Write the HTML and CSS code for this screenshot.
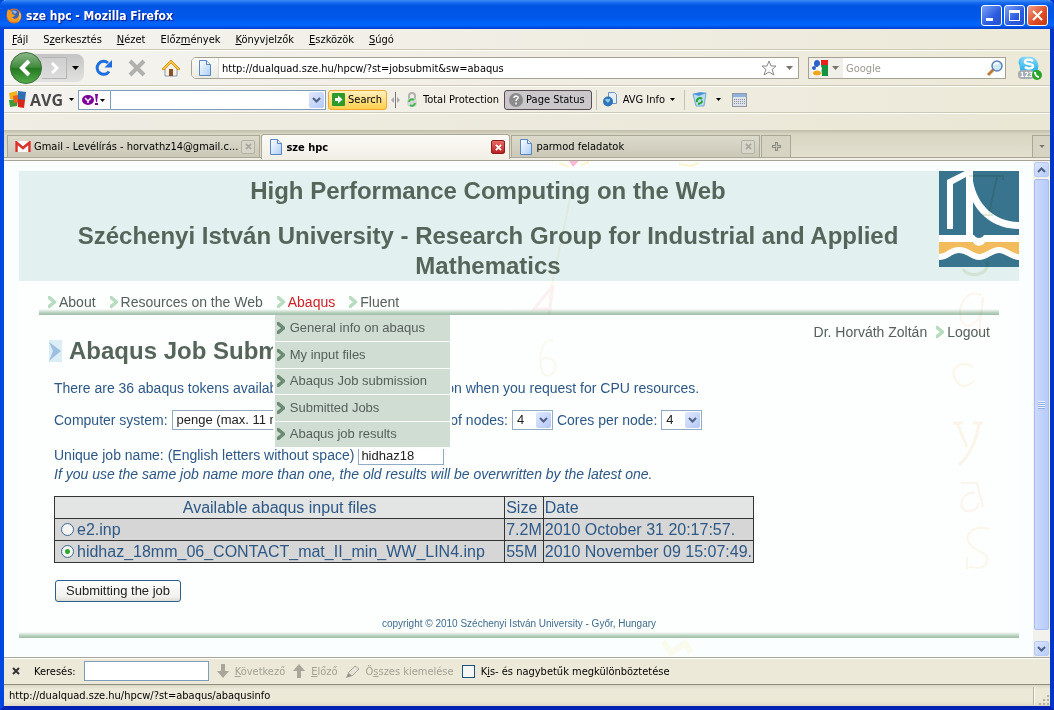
FILE: index.html
```html
<!DOCTYPE html>
<html lang="hu">
  <head>
    <meta charset="utf-8" />
    <title>sze hpc - Mozilla Firefox</title>
    <link rel="stylesheet" href="styles.css">
  </head>
  <body>
    <svg class="defs" width="0" height="0">
      <defs>
        <linearGradient id="greenball" x1="0" y1="0" x2="0" y2="1">
          <stop offset="0" stop-color="#8db98a" />
          <stop offset="0.48" stop-color="#3f8a3c" />
          <stop offset="0.52" stop-color="#237a20" />
          <stop offset="1" stop-color="#55ad4c" />
        </linearGradient>
        <linearGradient id="sheet" x1="0" y1="0" x2="1" y2="1">
          <stop offset="0" stop-color="#ffffff" />
          <stop offset="1" stop-color="#a9cdf5" />
        </linearGradient>
        <linearGradient id="skyblue" x1="0" y1="0" x2="0" y2="1">
          <stop offset="0" stop-color="#8fdcf8" />
          <stop offset="1" stop-color="#0ba4e4" />
        </linearGradient>
        <symbol id="down" viewBox="0 0 7 4"><path d="M0 0h7L3.5 4z" fill="currentColor" /></symbol>
        <symbol id="doc" viewBox="0 0 14 16">
          <path d="M1.500.5h7l4 4v11h-11z" fill="url(#sheet)" stroke="#5b86c4" />
          <path d="M8.500.5v4h4" fill="#dcebfb" stroke="#5b86c4" />
        </symbol>
        <symbol id="cross" viewBox="0 0 8 8"><path d="M1 1l6 6M7 1L1 7" fill="none" stroke="currentColor" stroke-width="2" /></symbol>
        <symbol id="chev" viewBox="0 0 9 12"><path d="M0 0h2l6 5v2l-6 5H0V9l4-3-4-3z" fill="currentColor" /></symbol>
        <symbol id="vee" viewBox="0 0 9 6"><path d="M1 1l3.500 3.500L8 1" fill="none" stroke="currentColor" stroke-width="2" /></symbol>
      </defs>
    </svg>

    <div class="window">
      <header class="titlebar">
        <svg width="16" height="16" viewBox="0 0 16 16">
          <circle cx="8" cy="8" r="7.500" fill="#e2731a" />
          <circle cx="8.500" cy="6.500" r="5" fill="#3c63b5" />
          <path d="M6 3c2-1 4 0 5 1l-2 2z" fill="#8fb6e8" />
          <path d="M1 4l1-3 2 2c2 0 3 1 2 3l3 1c-1 2-2 2-3 2 2 3 6 2 7-2 1 4-2 7-5 7-5 0-8-5-7-10z" fill="#f49b25" />
          <path d="M14 4c2 5 0 9-4 11 3-2 4-6 3-9z" fill="#fbd34b" />
        </svg>
        <h1>sze hpc - Mozilla Firefox</h1>
        <button class="winbtn" aria-label="Minimize"><svg width="19" height="19"><path d="M4 12h7v3H4z" fill="#fff" /></svg></button>
        <button class="winbtn" aria-label="Maximize"><svg width="19" height="19"><path d="M4 4h11v11H4zM5 7v7h9V7z" fill="#fff" fill-rule="evenodd" /></svg></button>
        <button class="winbtn close" aria-label="Close"><svg width="19" height="19"><path d="M5 5l9 9M14 5l-9 9" stroke="#fff" stroke-width="2" /></svg></button>
      </header>

      <nav class="menubar">
        <button><u>F</u>ájl</button>
        <button>S<u>z</u>erkesztés</button>
        <button><u>N</u>ézet</button>
        <button>Előz<u>m</u>ények</button>
        <button><u>K</u>önyvjelzők</button>
        <button><u>E</u>szközök</button>
        <button><u>S</u>úgó</button>
      </nav>

      <div class="toolbar navbar">
        <div class="history">
          <button class="back" aria-label="Back">
            <svg width="32" height="32" viewBox="0 0 32 32">
              <circle cx="16" cy="16" r="15.500" fill="url(#greenball)" stroke="#3c6f3a" />
              <path d="M19 9l-7 7 7 7" fill="none" stroke="#fff" stroke-width="4" />
            </svg>
          </button>
          <button class="forward" aria-label="Forward">
            <svg width="9" height="12" viewBox="0 0 9 12"><path d="M2 1l5 5-5 5" fill="none" stroke="#fff" stroke-width="3" /></svg>
          </button>
          <button class="recent" aria-label="Recent pages"><svg width="7" height="4"><use href="#down" /></svg></button>
        </div>
        <button class="tool reload" aria-label="Reload">
          <svg width="18" height="18" viewBox="0 0 18 18">
            <path d="M14 12.500A6.500 6.500 0 1 1 13 4" fill="none" stroke="#1d6fe0" stroke-width="3" />
            <path d="M17 1v7.500H9.500z" fill="#1d6fe0" />
          </svg>
        </button>
        <button class="tool stop" aria-label="Stop">
          <svg width="18" height="18" viewBox="0 0 18 18"><path d="M2 2l14 14M16 2L2 16" stroke="#b0b0ad" stroke-width="4" /></svg>
        </button>
        <button class="tool home" aria-label="Home">
          <svg width="20" height="18" viewBox="0 0 20 18">
            <path d="M4 9l6-6 6 6v8H4z" fill="#f4f1e6" stroke="#8a98b5" />
            <path d="M1 10l9-9 9 9-2 1-7-7-7 7z" fill="#f8c84a" stroke="#d8951d" />
            <path d="M8 10h4v7H8z" fill="#8a4f23" />
          </svg>
        </button>
        <label class="urlbar">
          <span class="site"><svg width="14" height="16"><use href="#doc" /></svg></span>
          <input type="text" aria-label="Address" value="http://dualquad.sze.hu/hpcw/?st=jobsubmit&amp;sw=abaqus" />
          <svg width="16" height="16" viewBox="0 0 16 16"><path d="M8 1l2 5h5l-4 3.500 2 5.500-5-3-5 3 2-5.500L1 6h5z" fill="#fff" stroke="#8a8a8a" /></svg>
          <svg class="grey" width="7" height="4"><use href="#down" /></svg>
        </label>
        <label class="searchbar">
          <span class="engine">
            <svg width="16" height="16" viewBox="0 0 16 16">
              <path d="M0 0h16v16H0z" fill="#fff" />
              <path d="M9 0h7v5h-7z" fill="#e8201c" />
              <path d="M9 5h7v11h-6z" fill="#149443" />
              <ellipse cx="5" cy="3.500" rx="3" ry="3.500" fill="#2a62c9" />
              <circle cx="2" cy="8" r="2" fill="#2a62c9" />
              <path d="M7 5l3 3-1 3-4-2z" fill="#fff" />
              <ellipse cx="5" cy="13" rx="4" ry="2.500" fill="#f3a51b" />
            </svg>
            <svg class="grey" width="7" height="4"><use href="#down" /></svg>
          </span>
          <input type="text" aria-label="Search" placeholder="Google" />
          <svg width="17" height="17" viewBox="0 0 17 17">
            <path d="M2 15l6-6" stroke="#c2793a" stroke-width="3" />
            <circle cx="11" cy="6" r="5" fill="#cfe8fb" stroke="#5c83b6" stroke-width="1.500" />
            <path d="M8 5c1-2 3-2 4-1" fill="none" stroke="#fff" stroke-width="2" />
          </svg>
        </label>
        <button class="tool skype" aria-label="Skype">
          <svg width="24" height="24" viewBox="0 0 24 24">
            <circle cx="6" cy="6" r="5.500" fill="url(#skyblue)" />
            <circle cx="11" cy="10" r="9.500" fill="url(#skyblue)" />
            <path d="M15 5c-3-2-8-2-8 1s8 1 8 4-6 3-8 1" fill="none" stroke="#fff" stroke-width="2.500" />
            <rect y="14" width="16" height="9" rx="4" fill="#a5adb2" />
            <text x="2" y="21" class="badge">123</text>
            <circle cx="19" cy="19" r="5" fill="#28a428" />
            <path d="M17 16c0 3 2 5 4 5" fill="none" stroke="#fff" stroke-width="2" />
          </svg>
        </button>
      </div>

      <div class="toolbar avgbar">
        <button class="avg">
          <svg width="17" height="17" viewBox="0 0 17 17">
            <path d="M0 2l8-2v8H1z" fill="#f2b31c" />
            <path d="M9 0l8 1-1 8H8z" fill="#2f6fb4" />
            <path d="M8 8l8 1-1 8-6-1z" fill="#d8261c" />
            <path d="M0 9l8-1v7l-7 1z" fill="#3f9a34" />
            <path d="M4 5l5-1v7l-4 1z" fill="#e8601d" />
          </svg>
          <b>AVG</b>
          <svg width="5" height="3"><use href="#down" /></svg>
        </button>
        <div class="combo">
          <button class="yahoo" aria-label="Yahoo">
            <svg width="25" height="12" viewBox="0 0 25 12">
              <ellipse cx="6" cy="6" rx="6" ry="5" fill="#7b0099" />
              <path d="M3 4l3 3 3-3M6 7v2" fill="none" stroke="#fff" stroke-width="1.500" />
              <path d="M13 0h3l-1 8h-1zM13 9h3v2h-3z" fill="#7b0099" />
              <path d="M18 5h5l-2.500 3z" fill="#000" />
            </svg>
          </button>
          <input type="text" aria-label="Yahoo search" />
          <button class="drop" aria-label="Open"><svg width="9" height="6"><use href="#vee" /></svg></button>
        </div>
        <button class="go">
          <svg width="13" height="13" viewBox="0 0 13 13">
            <rect width="13" height="13" rx="1" fill="#2f9a2c" />
            <path d="M3 5h3V2.500L10.500 6.500 6 10.500V8H3z" fill="#fff" />
          </svg>
          Search
        </button>
        <svg class="grip" width="9" height="16" viewBox="0 0 9 16"><path d="M4 0h1v16H4z" fill="#777" /><path d="M3 5v6L0 8zM6 5v6l3-3z" fill="#aaa" /></svg>
        <button class="flat lock">
          <svg width="12" height="16" viewBox="0 0 12 16">
            <path d="M3 7V4a3 3 0 0 1 6 0v3" fill="none" stroke="#b0b2b0" stroke-width="2" />
            <rect x="1" y="6" width="10" height="9" rx="4" fill="#d4d8d4" />
            <path d="M3 10a3 3 0 0 1 5-2M9 11a3 3 0 0 1-5 2" fill="none" stroke="#3fb54a" stroke-width="2" />
          </svg>
          Total Protection
        </button>
        <button class="status">
          <svg width="14" height="14" viewBox="0 0 14 14">
            <circle cx="7" cy="7" r="7" fill="#8b8b8b" />
            <path d="M5 5c0-3 5-2 4 0-.5 1-2 1.500-2 3M7 9.500v2" fill="none" stroke="#fff" stroke-width="1.500" />
          </svg>
          Page Status
        </button>
        <span class="sep"></span>
        <button class="flat info">
          <svg width="15" height="15" viewBox="0 0 15 15">
            <path d="M5.500.5h6l2 2v9h-8z" fill="#e4effa" stroke="#6b93c4" />
            <circle cx="5" cy="9.500" r="5" fill="#2d74b8" />
            <path d="M2 8c2-3 3 0 4-1s2 1 0 3-2-1-4-2z" fill="#8fcbe8" />
          </svg>
          AVG Info
          <svg width="5" height="3"><use href="#down" /></svg>
        </button>
        <span class="sep"></span>
        <button class="flat bin" aria-label="Recycle">
          <svg width="15" height="15" viewBox="0 0 15 15">
            <path d="M1 2l13-1-2 13H4z" fill="#b9dcf3" stroke="#77a9d0" />
            <path d="M1 2l6 2 7-3-6-1z" fill="#4f95d6" />
            <path d="M5 10a3 3 0 0 1 5-3M10 8.500a3 3 0 0 1-4 3" fill="none" stroke="#29a329" stroke-width="2" />
          </svg>
          <svg width="5" height="3"><use href="#down" /></svg>
        </button>
        <button class="flat" aria-label="Calculator">
          <svg width="15" height="14" viewBox="0 0 15 14">
            <rect x=".5" y=".5" width="14" height="13" fill="#dfe3e8" stroke="#8f99a5" />
            <path d="M1 1h13v3H1z" fill="#8db5dc" />
            <path d="M2 6.500h11M2 8.500h11M2 10.500h11" stroke="#8893a0" stroke-dasharray="1 1" />
          </svg>
        </button>
      </div>

      <div class="emptybar"></div>

      <div class="tabstrip">
        <div class="tab">
          <svg width="16" height="11" viewBox="0 0 16 11">
            <path d="M0 0h16v11H0z" fill="#fff" />
            <path d="M1.500 11V1.500L8 7l6.500-5.500V11" fill="none" stroke="#d9332d" stroke-width="2.500" />
          </svg>
          <a href="#gmail">Gmail - Levélírás - horvathz14@gmail.c...</a>
          <button class="x" aria-label="Close tab"><svg width="7" height="7"><use href="#cross" /></svg></button>
        </div>
        <div class="tab current">
          <svg width="14" height="16"><use href="#doc" /></svg>
          <a href="#szehpc">sze hpc</a>
          <button class="x" aria-label="Close tab"><svg width="7" height="7"><use href="#cross" /></svg></button>
        </div>
        <div class="tab">
          <svg width="14" height="16"><use href="#doc" /></svg>
          <a href="#parmod">parmod feladatok</a>
          <button class="x" aria-label="Close tab"><svg width="7" height="7"><use href="#cross" /></svg></button>
        </div>
        <button class="newtab" aria-label="New tab"><svg width="9" height="9" viewBox="0 0 9 9"><path d="M3 0h3v3h3v3H6v3H3V6H0V3h3z" fill="#8b8b80" /><path d="M4 1h1v3h3v1H5v3H4V5H1V4h3z" fill="#c9c7b8" /></svg></button>
        <button class="alltabs" aria-label="List tabs"><svg width="6" height="3"><use href="#down" /></svg></button>
      </div>

      <div class="viewport">
        <div class="page">
          <svg class="scribble" width="520" height="496" viewBox="0 0 520 496" aria-hidden="true">
            <g fill="none" stroke-width="2">
              <path d="M66 0l4 6 6-6z" fill="#ffa0c8" stroke="none" />
              <path d="M56 2l10 4M78 4l8-3M176 3l12 2 8-3" stroke="#fff3b8" />
              <path d="M70 22l-10 50-14 66" stroke="#faf6e6" />
              <path d="M49 126l-18 22h18M50 124l-4 30" stroke="#fdecec" stroke-width="3" />
              <path d="M50 180c-14-6-16 30-8 34s16-12 6-16-12 4-10 10" stroke="#fbf8ea" />
              <path d="M466 15h34v4M494 16l-8 36M480 54h10" stroke="#d6dfc9" />
              <path d="M460 108c6 10 28 6 24-8" stroke="#e5ebd4" stroke-width="3" />
              <path d="M478 134c-14-6-24 10-20 24s22 6 22-22l-4 36" stroke="#fcf3e8" />
              <path d="M470 206c-12-8-24 2-18 12s12 8 20 2" stroke="#fdf3e2" />
              <path d="M450 262h10M470 262h10M454 262l10 24M476 262c-2 16-10 34-20 42" stroke="#fdf1e0" stroke-width="3" />
              <path d="M458 322h16l6 24M472 332c-14-2-18 16-8 18s12-8 12-8" stroke="#fdf1e6" />
              <path d="M486 368c-14-4-26 4-20 14s20 8 18 18-12 6-18 6M464 396v12" stroke="#fdf5e0" />
              <path d="M160 480l8 12 14-10 6 10" stroke="#fdfce6" stroke-width="6" />
            </g>
          </svg>
          <div class="wrap">
            <header class="banner">
              <div class="names">
                <h2>High Performance Computing on the Web</h2>
                <h2>Széchenyi István University - Research Group for Industrial and Applied Mathematics</h2>
              </div>
              <svg class="logo" width="80" height="96" viewBox="0 0 80 96">
                <path d="M0 0h80v96H0z" fill="#39748f" />
                <path d="M8 58V9L26 0h8v64h-7V6L14 13v45z" fill="#fff" />
                <path d="M34 10c4 24 22 41 46 41v7C58 58 42 46 34 31z" fill="#fff" />
                <path d="M0 71h80v16H0z" fill="#f2bb5b" />
                <path d="M0 64h80v7H46c-2 5-10 5-12 0H0z" fill="#fff" />
                <path d="M35 64c2 4 8 4 10 0z" fill="#39748f" />
                <path d="M0 86c10 0 10-7 20-7s12 7 20 7 12-7 20-7 12 7 20 7v10H0z" fill="#39748f" />
                <path d="M0 86c10 0 10-7 20-7s12 7 20 7 12-7 20-7 12 7 20 7" fill="none" stroke="#fff" stroke-width="6" />
              </svg>
            </header>

            <ul class="mainnav">
              <li><svg width="9" height="12"><use href="#chev" /></svg><a href="#about">About</a></li>
              <li><svg width="9" height="12"><use href="#chev" /></svg><a href="#resources">Resources on the Web</a></li>
              <li class="open">
                <svg width="9" height="12"><use href="#chev" /></svg><a href="#abaqus">Abaqus</a>
                <ul class="submenu">
                  <li><svg width="9" height="12"><use href="#chev" /></svg><a href="#abaqusinfo">General info on abaqus</a></li>
                  <li><svg width="9" height="12"><use href="#chev" /></svg><a href="#files">My input files</a></li>
                  <li><svg width="9" height="12"><use href="#chev" /></svg><a href="#jobsubmit">Abaqus Job submission</a></li>
                  <li><svg width="9" height="12"><use href="#chev" /></svg><a href="#jobs">Submitted Jobs</a></li>
                  <li><svg width="9" height="12"><use href="#chev" /></svg><a href="#results">Abaqus job results</a></li>
                </ul>
              </li>
              <li><svg width="9" height="12"><use href="#chev" /></svg><a href="#fluent">Fluent</a></li>
            </ul>

            <div class="headrow">
              <svg width="13" height="22" viewBox="0 0 13 22">
                <path d="M0 0h13v22H0z" fill="#dceef5" />
                <path d="M0 2l12 9-12 10 4-10z" fill="#9dbfe2" />
              </svg>
              <h2>Abaqus Job Submission</h2>
              <p class="user">Dr. Horváth Zoltán <svg width="9" height="12"><use href="#chev" /></svg><a href="#logout">Logout</a></p>
            </div>

            <form class="jobform">
              <p>There are 36 abaqus tokens available, take this into consideration when you request for CPU resources.</p>
              <div class="row">
                <label for="system">Computer system:</label>
                <span class="pick system">
                  <select id="system"><option>penge (max. 11 nodes)</option></select>
                  <span class="arrow"><svg width="9" height="6"><use href="#vee" /></svg></span>
                </span>
                <label for="nodes">Number of nodes:</label>
                <span class="pick">
                  <select id="nodes"><option>4</option></select>
                  <span class="arrow"><svg width="9" height="6"><use href="#vee" /></svg></span>
                </span>
                <label for="cores">Cores per node:</label>
                <span class="pick">
                  <select id="cores"><option>4</option></select>
                  <span class="arrow"><svg width="9" height="6"><use href="#vee" /></svg></span>
                </span>
              </div>
              <div class="row jobname">
                <label for="jobname">Unique job name: (English letters without space)</label>
                <input type="text" id="jobname" value="hidhaz18" />
              </div>
              <p class="note">If you use the same job name more than one, the old results will be overwritten by the latest one.</p>
              <table>
                <thead>
                  <tr><th class="file">Available abaqus input files</th><th>Size</th><th>Date</th></tr>
                </thead>
                <tbody>
                  <tr>
                    <td><label><input type="radio" name="inp" />e2.inp</label></td>
                    <td>7.2M</td>
                    <td>2010 October 31 20:17:57.</td>
                  </tr>
                  <tr>
                    <td><label><input type="radio" name="inp" checked />hidhaz_18mm_06_CONTACT_mat_II_min_WW_LIN4.inp</label></td>
                    <td>55M</td>
                    <td>2010 November 09 15:07:49.</td>
                  </tr>
                </tbody>
              </table>
              <button type="button" class="submit">Submitting the job</button>
            </form>
            <footer class="copy">copyright © 2010 Széchenyi István University - Győr, Hungary</footer>
          </div>
        </div>
        <div class="scrollbar">
          <button aria-label="Scroll up"><svg width="9" height="6" class="flip"><use href="#vee" /></svg></button>
          <div class="thumb"></div>
          <button aria-label="Scroll down"><svg width="9" height="6"><use href="#vee" /></svg></button>
        </div>
      </div>

      <div class="findbar">
        <button class="closefind" aria-label="Close"><svg width="8" height="8"><use href="#cross" /></svg></button>
        <label for="find">Keresés:</label>
        <input type="text" id="find" />
        <button disabled><svg width="12" height="14" viewBox="0 0 12 14"><path d="M4 0h4v7h4l-6 7-6-7h4z" fill="#a8a69b" /></svg><span><u>K</u>övetkező</span></button>
        <button disabled><svg width="12" height="14" viewBox="0 0 12 14"><path d="M4 14h4V7h4L6 0 0 7h4z" fill="#a8a69b" /></svg><span><u>E</u>lőző</span></button>
        <button disabled><svg width="14" height="13" viewBox="0 0 14 13"><path d="M2 8l7-7 4 3-7 7z" fill="#e6e4da" stroke="#a8a69b" /><path d="M2 8l4 3-6 2z" fill="#98968b" /></svg><span>Ö<u>s</u>szes kiemelése</span></button>
        <label class="case"><input type="checkbox" /><span>K<u>i</u>s- és nagybetűk megkülönböztetése</span></label>
      </div>
      <div class="statusbar">
        <span>http://dualquad.sze.hu/hpcw/?st=abaqus/abaqusinfo</span>
        <svg width="17" height="20" viewBox="0 0 17 20">
          <path d="M0 1h1v18H0z" fill="#b5b19f" /><path d="M1 1h1v18H1z" fill="#fff" />
          <path d="M14 9h2v2h-2zM10 13h2v2h-2zM14 13h2v2h-2zM6 17h2v2H6zM10 17h2v2h-2zM14 17h2v2h-2z" fill="#b5b19f" />
        </svg>
      </div>
    </div>
  </body>
</html>
```
FILE: styles.css
```css
* {
  box-sizing: border-box;
}
body {
  margin: 0;
  font-family: "DejaVu Sans Condensed", "Noto Sans", sans-serif;
  font-size: 11px;
  color: #000;
}
h1,
h2,
p,
ul {
  margin: 0;
  padding: 0;
  font-size: inherit;
}
ul {
  list-style: none;
}
svg {
  display: block;
  flex: none;
}
.defs {
  position: absolute;
}
button,
input,
select {
  font: inherit;
  color: inherit;
  margin: 0;
  padding: 0;
  border: 0;
  border-radius: 0;
  background: none;
}
a {
  color: inherit;
  text-decoration: none;
}
.window {
  display: flex;
  flex-direction: column;
  min-height: 100vh;
  border: 4px solid #0046e0;
  border-top: 0;
  border-right-color: #0036c8;
  border-bottom-color: #0022b4;
  background: #ece9d8;
}

/* title bar */
.titlebar {
  display: flex;
  align-items: center;
  gap: 2px;
  height: 29px;
  margin: 0 -4px;
  padding: 2px 6px 0;
  background: linear-gradient(#3c8cf5 0, #1368ee 3px, #0054e3 6px, #0058ea 18px, #0066ff 25px, #003dd0 29px);
  border-radius: 6px 6px 0 0;
}
.titlebar h1 {
  flex: 1;
  padding-left: 2px;
  color: #fff;
  font-size: 12px;
  font-weight: bold;
  text-shadow: 1px 1px 1px #0a1883;
}
.winbtn {
  width: 21px;
  height: 21px;
  border: 1px solid #fff;
  border-radius: 3px;
  background: linear-gradient(135deg, #7da2f5, #2a5be0 60%, #2450cc);
}
.winbtn.close {
  background: linear-gradient(135deg, #f0a088, #dd4a22 60%, #c23a12);
}

/* menu and toolbars */
.menubar {
  display: flex;
  gap: 15px;
  height: 21px;
  padding: 0 8px;
  background: linear-gradient(90deg, #f4f3ef, #ece9d8);
  border-bottom: 1px solid #cdc9b6;
}
.toolbar {
  display: flex;
  align-items: center;
  border-top: 1px solid #fff;
  border-bottom: 1px solid #cdc9b6;
  background: linear-gradient(90deg, #f4f3ef, #ece9d8);
}
.navbar {
  height: 36px;
  padding: 0 8px 0 6px;
}
.history {
  display: flex;
  align-items: center;
  width: 74px;
  height: 28px;
  border-radius: 14px 8px 8px 14px;
  background: linear-gradient(#c4c4c4, #e2e2e0);
}
.forward {
  display: flex;
  align-items: center;
  justify-content: center;
  width: 25px;
  height: 22px;
  border: 1px solid #b5b5b5;
  border-left: 0;
  background: linear-gradient(#cfcfcf, #dcdcdc);
}
.recent {
  padding: 4px 5px;
}
.reload {
  margin-left: 11px;
}
.stop {
  margin-left: 15px;
}
.home {
  margin-left: 15px;
}
.urlbar,
.searchbar {
  display: flex;
  align-items: center;
  height: 22px;
  border: 1px solid #a5a293;
  background: #fff;
}
.urlbar {
  flex: 1;
  gap: 9px;
  margin-left: 10px;
  padding-right: 5px;
  border-radius: 5px 0 0 5px;
}
.site {
  display: flex;
  align-items: center;
  justify-content: center;
  width: 27px;
  height: 20px;
  border-right: 1px solid #dcdad0;
  border-radius: 4px 0 0 4px;
  background: linear-gradient(#fbfbf9, #ecebe3);
}
.urlbar input {
  margin-left: -6px;
}
.urlbar input,
.searchbar input {
  flex: 1;
  min-width: 0;
}
.grey {
  color: #77756b;
}
.searchbar {
  width: 198px;
  margin-left: 9px;
  padding-right: 2px;
}
.engine {
  display: flex;
  align-items: center;
  gap: 4px;
  height: 20px;
  padding: 0 4px 0 3px;
  margin-right: 3px;
  background: #f0efe9;
}
.searchbar input::placeholder {
  color: #9b998e;
  opacity: 1;
}
.skype {
  margin-left: 12px;
}
.badge {
  font-size: 7px;
  font-weight: bold;
  fill: #fff;
}
.avgbar {
  height: 27px;
  padding-left: 5px;
}
.avg,
.flat,
.go,
.status {
  display: flex;
  align-items: center;
  gap: 5px;
}
.avg {
  gap: 4px;
  margin-right: 4px;
}
.avg b {
  margin-right: 2px;
  font: bold 16px/18px "Open Sans", sans-serif;
  color: #4a4a4a;
}
.combo {
  display: flex;
  width: 248px;
  height: 20px;
  border: 1px solid #7f9db9;
  background: #fff;
}
.yahoo {
  padding: 0 3px;
  border-right: 1px solid #7f9db9;
}
.combo input {
  flex: 1;
  min-width: 0;
}
.drop,
.arrow {
  display: flex;
  align-items: center;
  justify-content: center;
  width: 15px;
  margin: 1px;
  border-radius: 2px;
  background: linear-gradient(135deg, #dfe8fd, #b4c8f6);
  color: #4d6185;
}
.go {
  height: 20px;
  margin-left: 2px;
  padding: 0 4px 0 3px;
  border: 1px solid #f0a92a;
  border-radius: 3px;
  background: linear-gradient(#fff0c0, #ffd04d);
  gap: 3px;
}
.grip {
  margin: 0 6px 0 4px;
}
.status {
  height: 20px;
  margin: 0 4px 0 5px;
  padding: 0 6px 0 4px;
  border: 1px solid #5a4c50;
  border-radius: 3px;
  background: #cac8cb;
  gap: 3px;
}
.sep {
  width: 1px;
  height: 20px;
  background: #c5c1ad;
}
.info {
  margin: 0 9px 0 6px;
}
.bin {
  gap: 9px;
  margin: 0 11px 0 7px;
}
.emptybar {
  height: 17px;
  border-top: 1px solid #fff;
  background: linear-gradient(90deg, #efede4, #eae7d5);
}

/* tabs */
.tabstrip {
  display: flex;
  align-items: flex-start;
  gap: 1px;
  height: 31px;
  padding: 5px 0 0 3px;
  border-bottom: 1px solid #a9a393;
  background: linear-gradient(#bfbcab, #d8d5c3 4px, #e3e0cf 27px, #a9a393 27px, #a9a393 28px, #f1efe5 28px);
}
.tab {
  display: flex;
  align-items: center;
  gap: 3px;
  flex: 0 1 249px;
  height: 23px;
  padding: 0 4px 0 7px;
  border: 1px solid #a9a796;
  background: linear-gradient(#dcdacb, #cbc8b8);
}
.tab a {
  flex: 1;
  white-space: nowrap;
}
.tab.current {
  height: 25px;
  margin-top: -1px;
  border-bottom: 0;
  border-radius: 3px 3px 0 0;
  background: linear-gradient(#fbfaf6, #f1efe5);
  font-weight: bold;
}
.x {
  display: flex;
  align-items: center;
  justify-content: center;
  width: 14px;
  height: 14px;
  border: 1px solid #b3b1a4;
  border-radius: 2px;
  color: #aaa89b;
  background: #d8d6ca;
}
.current .x {
  border-color: #8f1d1d;
  background: linear-gradient(#e86a66, #b82222);
  color: #fff;
}
.newtab,
.alltabs {
  display: flex;
  align-items: center;
  justify-content: center;
  width: 30px;
  height: 23px;
  border: 1px solid #a9a796;
  background: #d6d3c3;
}
.alltabs {
  width: 18px;
  margin-left: auto;
  border-right: 0;
  color: #77756b;
}

/* page content */
.viewport {
  display: flex;
  flex: 1;
}
.page {
  position: relative;
  flex: 1;
  padding: 10px 14px 18px 15px;
  background: #fbfefe;
  font: 14px/18px "Liberation Sans", Arial, sans-serif;
  color: #2d5886;
}
.wrap {
  background: #fdfefe;
}
.scribble {
  position: absolute;
  top: 0;
  right: 10px;
  mix-blend-mode: multiply;
  opacity: 0.7;
  pointer-events: none;
  z-index: 1;
}
.banner {
  display: flex;
  justify-content: space-between;
  padding-left: 35px;
  background: #e3f0f0;
}
.names {
  flex: 1;
  padding-top: 5px;
  text-align: center;
}
.names h2 {
  font-size: 24px;
  line-height: 30px;
  color: #56655a;
}
.names h2 + h2 {
  margin-top: 15px;
}
.logo {
  margin-left: 17px;
}
.mainnav {
  display: flex;
  gap: 14px;
  height: 34px;
  margin: 0 20px;
  padding: 12px 9px 4px;
  background: linear-gradient(#fdfefe, #b2cdb8 4px, #9fbfa8) bottom / 100% 6px no-repeat;
  color: #55605a;
}
.mainnav li {
  display: flex;
  align-items: center;
  gap: 2px;
  position: relative;
}
.mainnav svg,
.user svg {
  color: #b8dcc0;
}
.mainnav .open > a {
  color: #cc2229;
}
.submenu {
  display: grid;
  grid-auto-rows: 1fr;
  position: absolute;
  z-index: 2;
  top: 22px;
  left: -4px;
  width: 179px;
  height: 134px;
  border: 2px solid #fdfefe;
  border-top: 0;
  font-size: 13px;
}
.mainnav .submenu li {
  gap: 4px;
  padding-left: 2px;
  background: #d0ddd3;
}
.submenu li + li {
  border-top: 1px solid #fdfefe;
}
.mainnav .submenu svg {
  color: #6b8b72;
}
.headrow {
  display: flex;
  align-items: center;
  gap: 7px;
  height: 51px;
  padding: 21px 29px 0 30px;
}
.headrow h2 {
  flex: 1;
  font-size: 24px;
  line-height: 30px;
  color: #56655a;
}
.user {
  display: flex;
  align-items: center;
  align-self: flex-start;
  gap: 2px;
  margin-top: -13px;
  color: #55605a;
}
.user svg {
  margin-left: 7px;
}
.jobform {
  padding: 13px 0 0 35px;
}
.row {
  display: flex;
  align-items: center;
  gap: 4px;
  margin-top: 13px;
}
.jobname {
  margin-top: 15px;
}
.pick {
  position: relative;
  width: 41px;
}
.pick.system {
  width: 221px;
}
.pick select,
#jobname {
  display: block;
  width: 100%;
  height: 20px;
  padding-left: 4px;
  appearance: none;
  border: 1px solid #8fabc5;
  background: #fff;
  color: #222;
  font-size: 13px;
}
.pick .arrow {
  position: absolute;
  top: 1px;
  right: 1px;
  bottom: 1px;
  pointer-events: none;
}
#jobname {
  width: 86px;
  padding-left: 2px;
}
.note {
  font-style: italic;
}
.jobform table {
  width: 700px;
  max-width: 100%;
  margin: 13px 0 17px;
  border-collapse: collapse;
  font-size: 16px;
  line-height: 19px;
}
.jobform th,
.jobform td {
  padding: 1px;
  border: 1px solid #333;
  background: #d6d6d6;
  font-weight: normal;
  text-align: left;
  white-space: nowrap;
}
.jobform th {
  background: #e3e4e4;
}
.jobform .file {
  width: 100%;
  text-align: center;
}
.jobform td label {
  display: flex;
  align-items: center;
  gap: 3px;
  padding-left: 5px;
}
.jobform input[type="radio"] {
  width: 13px;
  height: 13px;
  appearance: none;
  border: 1px solid #3b6a94;
  border-radius: 50%;
  background: #f4f4f2;
}
.jobform input[type="radio"]:checked {
  background: radial-gradient(circle, #2fa82f 2px, #f4f4f2 3px);
}
.submit {
  display: block;
  height: 22px;
  margin-left: 1px;
  padding: 0 10px;
  border: 1px solid #2c5f8d;
  border-radius: 3px;
  background: linear-gradient(#fff, #f0f0ec 80%, #dcdad2);
  color: #222;
  font-size: 13px;
}
.copy {
  padding: 12px 0 5px;
  background: linear-gradient(#fdfefe, #b2cdb8 4px, #9fbfa8) bottom / 100% 6px no-repeat;
  color: #3f6c8c;
  font-size: 10px;
  line-height: 19px;
  text-align: center;
}
.scrollbar {
  display: flex;
  flex-direction: column;
  width: 17px;
  padding: 1px;
  background: #f2f1ec;
}
.scrollbar button {
  display: flex;
  align-items: center;
  justify-content: center;
  height: 15px;
  border: 1px solid #b8cbf6;
  border-radius: 2px;
  background: linear-gradient(135deg, #dbe5fd, #b9ccf9);
  color: #4d6185;
}
.flip {
  transform: rotate(180deg);
}
.thumb {
  flex: 1;
  margin: 2px 0 11px;
  border: 1px solid #a8bef0;
  border-radius: 2px;
  background:
    repeating-linear-gradient(#eef3fe 0 1px, #8fadea 1px 2px) center / 7px 8px no-repeat,
    linear-gradient(90deg, #cbd9fc, #b7cbf9);
}

/* find bar and status bar */
.findbar {
  display: flex;
  align-items: center;
  gap: 8px;
  height: 27px;
  padding-left: 8px;
  border-top: 1px solid #a9a699;
  box-shadow: inset 0 1px #fff;
  background: #ece9d8;
}
.closefind {
  margin-right: 6px;
  color: #333;
}
.findbar input[type="text"] {
  width: 125px;
  height: 20px;
  border: 1px solid #7f9db9;
  background: #fff;
}
.findbar button {
  display: flex;
  align-items: center;
  gap: 6px;
}
.findbar button:disabled {
  color: #a3a193;
}
.case {
  display: flex;
  align-items: center;
  gap: 6px;
}
.case input {
  width: 13px;
  height: 13px;
  appearance: none;
  border: 1px solid #1c5180;
  background: #f6f6f3;
}
.statusbar {
  display: flex;
  align-items: center;
  justify-content: space-between;
  height: 22px;
  padding-left: 5px;
  border-top: 1px solid #908d7f;
  background: linear-gradient(#d9d6c5, #ece9d8 4px, #ece9d8 16px, #ddd9c6);
}
```
